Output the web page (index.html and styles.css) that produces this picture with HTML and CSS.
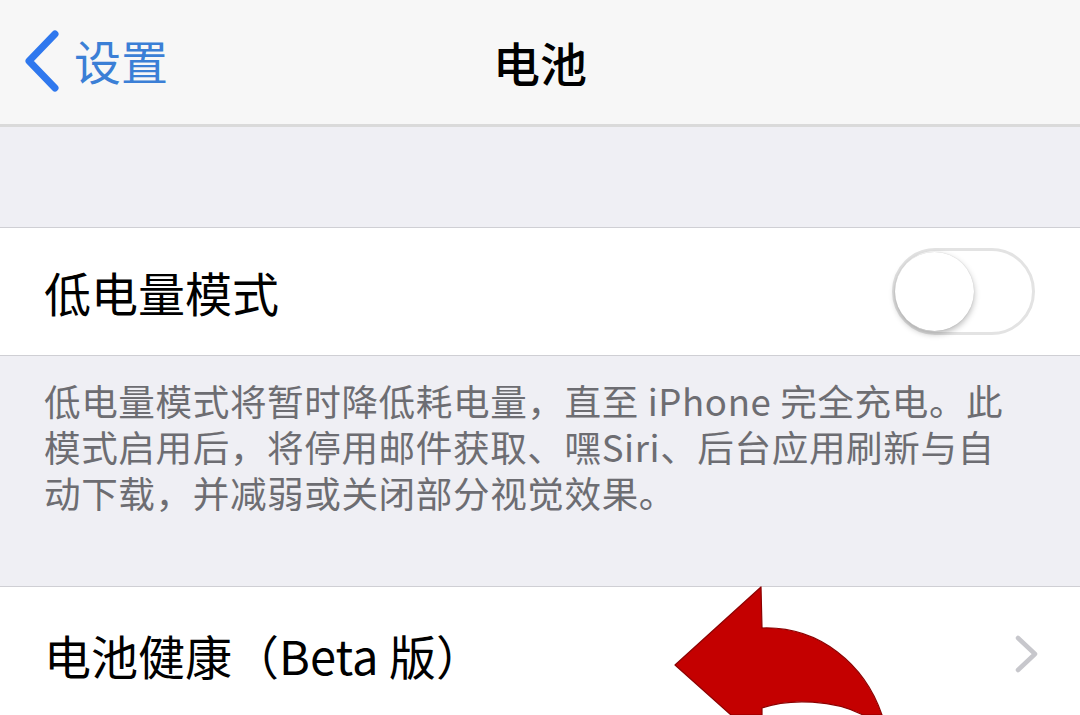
FILE: index.html
```html
<!DOCTYPE html>
<html lang="zh-CN">
<head>
    <meta charset="UTF-8">
    <meta name="viewport" content="width=device-width, initial-scale=1.0">
    <title>电池</title>
    <link rel="stylesheet" href="styles.css">
</head>
<body>
    <nav class="navbar">
        <a class="back" href="#">
            <svg class="back-icon" width="40" height="64" viewBox="0 0 40 64">
                <polyline points="32,6 6,33 32,60" fill="none" stroke="#2f78ee" stroke-width="7" stroke-linecap="round" stroke-linejoin="round"/>
            </svg>
            <span>设置</span>
        </a>
        <h1 class="title">电池</h1>
    </nav>

    <div class="spacer"></div>

    <div class="group">
        <div class="row">
            <span class="row-label">低电量模式</span>
            <span class="switch"><span class="knob"></span></span>
        </div>
    </div>

    <p class="footnote">低电量模式将暂时降低耗电量，直至 iPhone 完全充电。此模式启用后，将停用邮件获取、嘿Siri、后台应用刷新与自动下载，并减弱或关闭部分视觉效果。</p>

    <div class="group">
        <div class="row row-link">
            <span class="row-label">电池健康（Beta 版）</span>
            <svg class="chevron" width="26" height="40" viewBox="0 0 26 40">
                <polyline points="4,4 21,20 4,36" fill="none" stroke="#c7c7cc" stroke-width="4.5" stroke-linecap="round" stroke-linejoin="round"/>
            </svg>
        </div>
    </div>

    <!-- red arrow drawn over the screenshot -->
    <svg class="arrow" width="240" height="135" viewBox="0 0 240 135">
        <path d="M101,7 L102,48 C160,46 205,85 222,135 L203,135 C175,120 130,118 102,128 L102,135 L71,135 L15,85 Z" fill="#c40000" stroke="#8c0000" stroke-width="1.2" stroke-linejoin="round"/>
    </svg>
</body>
</html>
```

FILE: styles.css
```css
body {
    margin: 0;
    background-color: #efeff4;
    font-family: "Noto Sans CJK SC", "Noto Sans", sans-serif;
    color: #000;
    height: 715px;
    overflow: hidden;
    position: relative;
}
.navbar {
    height: 124px;
    background-color: #f7f7f7;
    border-bottom: 3px solid #dadada;
    display: flex;
    align-items: center;
    justify-content: center;
    position: relative;
}
.back {
    position: absolute;
    left: 23px;
    top: 28px;
    display: flex;
    align-items: center;
    color: #3b7fd6;
    text-decoration: none;
    font-size: 47px;
    line-height: 64px;
}
.back-icon {
    margin-right: 11px;
}
.title {
    margin: 0;
    font-size: 47px;
    font-weight: 500;
    line-height: 64px;
}
.spacer {
    height: 100px;
}
.group {
    background-color: #fff;
    border-top: 1px solid #cfcfd4;
    border-bottom: 1px solid #cfcfd4;
}
.row {
    height: 127px;
    display: flex;
    align-items: center;
    justify-content: space-between;
    padding: 0 45px 0 44px;
}
.row-link {
    height: 134px;
    padding-right: 40px;
}
.row-label {
    font-size: 47px;
    line-height: 1;
}
.switch {
    width: 137px;
    height: 81px;
    border: 3px solid #e3e3e3;
    border-radius: 45px;
    position: relative;
    background-color: #fff;
}
.knob {
    position: absolute;
    left: 0;
    top: 1px;
    width: 79px;
    height: 79px;
    border-radius: 50%;
    background-color: #fff;
    box-shadow: 0 3px 6px rgba(0, 0, 0, 0.28), 0 0 1px rgba(0, 0, 0, 0.2);
}
.footnote {
    margin: 0;
    height: 230px;
    box-sizing: border-box;
    padding: 22px 65px 0 44px;
    font-size: 36.6px;
    line-height: 46px;
    letter-spacing: 0.6px;
    color: #6d6d72;
}
.arrow {
    position: absolute;
    left: 660px;
    top: 580px;
}
```
